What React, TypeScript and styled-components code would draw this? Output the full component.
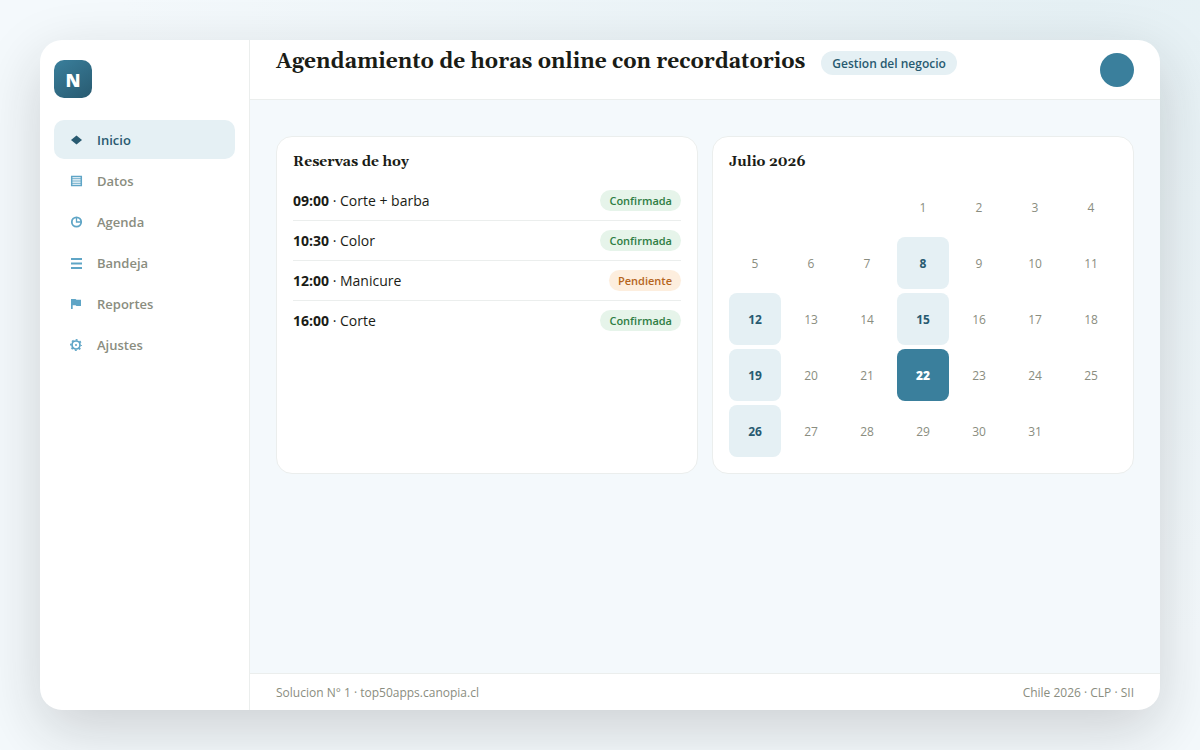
import React from "react";
import styled, { createGlobalStyle } from "styled-components";

const c = {
  ink: "#1a1c16",
  muted: "#8a8d80",
  line: "#ebeeed",
  primary: "#3a7f9c",
  deep: "#285a70",
  soft: "#e5f0f4",
  canvas: "#f4f9fc",
  icon: "#5fa5c6",
};

const serif = `Georgia, Gelasio, "Liberation Serif", serif`;

const GlobalStyle = createGlobalStyle`
  *, *::before, *::after { box-sizing: border-box; }
  body {
    margin: 0;
    min-height: 100vh;
    background: radial-gradient(1200px 800px at 90% 0%, ${c.soft}, ${c.canvas} 80%);
    color: ${c.ink};
    font-family: "Open Sans", "Noto Sans", sans-serif;
    font-size: 14px;
  }
  h1, h2, p, ul, ol { margin: 0; padding: 0; }
  ul, ol { list-style: none; }
`;

const Page = styled.div`
  min-height: 100vh;
  padding: 40px;
  display: flex;
`;

const Shell = styled.div`
  flex: 1;
  display: flex;
  background: #fff;
  border-radius: 22px;
  overflow: hidden;
  box-shadow: 0 20px 60px rgba(28, 28, 26, 0.18);
`;

const Sidebar = styled.aside`
  flex: 0 0 210px;
  padding: 20px 14px;
  border-right: 1px solid ${c.line};
`;

const Logo = styled.div`
  width: 38px;
  height: 38px;
  margin-bottom: 22px;
  padding-top: 2px;
  border-radius: 10px;
  display: grid;
  place-items: center;
  background: linear-gradient(145deg, ${c.primary}, ${c.deep});
  color: #fff;
  font-size: 18px;
  font-weight: 800;
`;

const Nav = styled.nav`
  display: flex;
  flex-direction: column;
  gap: 2px;
`;

const NavLink = styled.a<{ $active?: boolean }>`
  display: flex;
  align-items: center;
  gap: 11px;
  padding: 9px 12px;
  line-height: 21px;
  border-radius: 10px;
  font-size: 13px;
  font-weight: 600;
  text-decoration: none;
  color: ${(p) => (p.$active ? c.deep : c.muted)};
  background: ${(p) => (p.$active ? c.soft : "transparent")};
  svg {
    width: 20px;
    height: 15px;
    color: ${(p) => (p.$active ? c.deep : c.icon)};
  }
  span { padding-top: 1px; line-height: 20px; }
`;

const Main = styled.div`
  flex: 1;
  min-width: 0;
  display: flex;
  flex-direction: column;
`;

const Header = styled.header`
  min-height: 60px;
  padding: 0 26px;
  display: flex;
  align-items: center;
  justify-content: space-between;
  border-bottom: 1px solid ${c.line};
`;

const Heading = styled.div`
  align-self: flex-start;
  padding-top: 9px;
  display: flex;
  align-items: baseline;
  gap: 16px;
`;

const Title = styled.h1`
  font-family: ${serif};
  font-size: 21px;
  line-height: 26px;
  font-weight: 700;
`;

const Tag = styled.span`
  padding: 2px 11px 0;
  border-radius: 12px;
  background: ${c.soft};
  color: ${c.deep};
  font-size: 12px;
  line-height: 22px;
  font-weight: 600;
  white-space: nowrap;
`;

const Avatar = styled.div`
  flex: none;
  width: 34px;
  height: 34px;
  border-radius: 50%;
  background: ${c.primary};
`;

const Content = styled.main`
  flex: 1;
  padding: 36px 26px;
  display: grid;
  grid-template-columns: repeat(2, minmax(0, 1fr));
  align-content: start;
  gap: 14px;
  background: ${c.canvas};
`;

const Card = styled.section`
  padding: 16px;
  border: 1px solid ${c.line};
  border-radius: 16px;
  background: #fff;
`;

const CardTitle = styled.h2`
  margin-bottom: 10px;
  font-family: ${serif};
  font-size: 14px;
  line-height: 18px;
  font-weight: 700;
`;

const Booking = styled.li`
  display: flex;
  align-items: center;
  justify-content: space-between;
  height: 40px;
  font-size: 14px;
  border-bottom: 1px solid ${c.line};
  &:last-child { border-bottom-color: transparent; }
`;

const Status = styled.span<{ $pending?: boolean }>`
  padding: 0 9px;
  border-radius: 11px;
  font-size: 11px;
  line-height: 21px;
  font-weight: 600;
  color: ${(p) => (p.$pending ? "#b5651d" : "#2e7d43")};
  background: ${(p) => (p.$pending ? "#fdeede" : "#e6f4ea")};
`;

const Month = styled.ol`
  display: grid;
  grid-template-columns: repeat(7, 1fr);
  gap: 4px;
`;

type DayKind = "plain" | "booked" | "today";

const Day = styled.li<{ $kind: DayKind }>`
  aspect-ratio: 1;
  display: grid;
  place-items: center;
  border-radius: 8px;
  font-size: 12px;
  font-weight: ${(p) => ({ plain: 400, booked: 700, today: 800 })[p.$kind]};
  color: ${(p) => ({ plain: c.muted, booked: c.deep, today: "#fff" })[p.$kind]};
  background: ${(p) => ({ plain: "transparent", booked: c.soft, today: c.primary })[p.$kind]};
  &:first-child { grid-column-start: 4; }
`;

const Footer = styled.footer`
  display: flex;
  justify-content: space-between;
  padding: 11px 26px 9px;
  border-top: 1px solid ${c.line};
  color: ${c.muted};
  font-size: 12px;
  line-height: 16px;
`;

const icons = {
  diamond: <path d="M10.500 3.500 16 8l-5.500 4.500L5 8z" fill="currentColor" />,
  table: (
    <g fill="none" stroke="currentColor">
      <path d="M5.700 3.500h9.600v9H5.700z" strokeWidth="1.500" />
      <path d="M6 5.750h9M6 8h9M6 10.250h9" />
    </g>
  ),
  clock: (
    <g fill="none" stroke="currentColor">
      <circle cx="10.500" cy="8" r="4.700" strokeWidth="1.800" />
      <path d="M10.500 3.500V8H15" strokeWidth="1.300" />
    </g>
  ),
  bars: <path d="M5 4h11M5 8.500h11M5 13h11" stroke="currentColor" strokeWidth="1.900" />,
  flag: <path d="M5 3h4.500l1 .700H15V10h-4.500l-1-.700H6.700V13H5z" fill="currentColor" />,
  gear: (
    <g fill="none" stroke="currentColor">
      <circle cx="10" cy="8" r="4" strokeWidth="1.700" />
      <circle cx="10" cy="8" r="5.200" strokeWidth="1.500" strokeDasharray="1.900 2.184" strokeDashoffset="0.950" />
      <circle cx="10" cy="8" r="1" fill="currentColor" stroke="none" />
    </g>
  ),
};

const links: { label: string; icon: keyof typeof icons }[] = [
  { label: "Inicio", icon: "diamond" },
  { label: "Datos", icon: "table" },
  { label: "Agenda", icon: "clock" },
  { label: "Bandeja", icon: "bars" },
  { label: "Reportes", icon: "flag" },
  { label: "Ajustes", icon: "gear" },
];

const bookings = [
  { time: "09:00", service: "Corte + barba", pending: false },
  { time: "10:30", service: "Color", pending: false },
  { time: "12:00", service: "Manicure", pending: true },
  { time: "16:00", service: "Corte", pending: false },
];

const booked = [8, 12, 15, 19, 26];
const today = 22;
const kindOf = (d: number): DayKind =>
  d === today ? "today" : booked.includes(d) ? "booked" : "plain";

export default function App() {
  return (
    <>
      <GlobalStyle />
      <Page>
        <Shell>
          <Sidebar>
            <Logo>N</Logo>
            <Nav>
              {links.map((l, i) => (
                <NavLink key={l.label} href="#" $active={i === 0}>
                  <svg viewBox="0 0 20 15" aria-hidden="true">{icons[l.icon]}</svg>
                  <span>{l.label}</span>
                </NavLink>
              ))}
            </Nav>
          </Sidebar>
          <Main>
            <Header>
              <Heading>
                <Title>Agendamiento de horas online con recordatorios</Title>
                <Tag>Gestion del negocio</Tag>
              </Heading>
              <Avatar />
            </Header>
            <Content>
              <Card>
                <CardTitle>Reservas de hoy</CardTitle>
                <ul>
                  {bookings.map((b) => (
                    <Booking key={b.time}>
                      <span><b>{b.time}</b> · {b.service}</span>
                      <Status $pending={b.pending}>{b.pending ? "Pendiente" : "Confirmada"}</Status>
                    </Booking>
                  ))}
                </ul>
              </Card>
              <Card>
                <CardTitle>Julio 2026</CardTitle>
                <Month>
                  {Array.from({ length: 31 }, (_, i) => i + 1).map((d) => (
                    <Day key={d} $kind={kindOf(d)}>{d}</Day>
                  ))}
                </Month>
              </Card>
            </Content>
            <Footer>
              <span>Solucion N° 1 · top50apps.canopia.cl</span>
              <span>Chile 2026 · CLP · SII</span>
            </Footer>
          </Main>
        </Shell>
      </Page>
    </>
  );
}
